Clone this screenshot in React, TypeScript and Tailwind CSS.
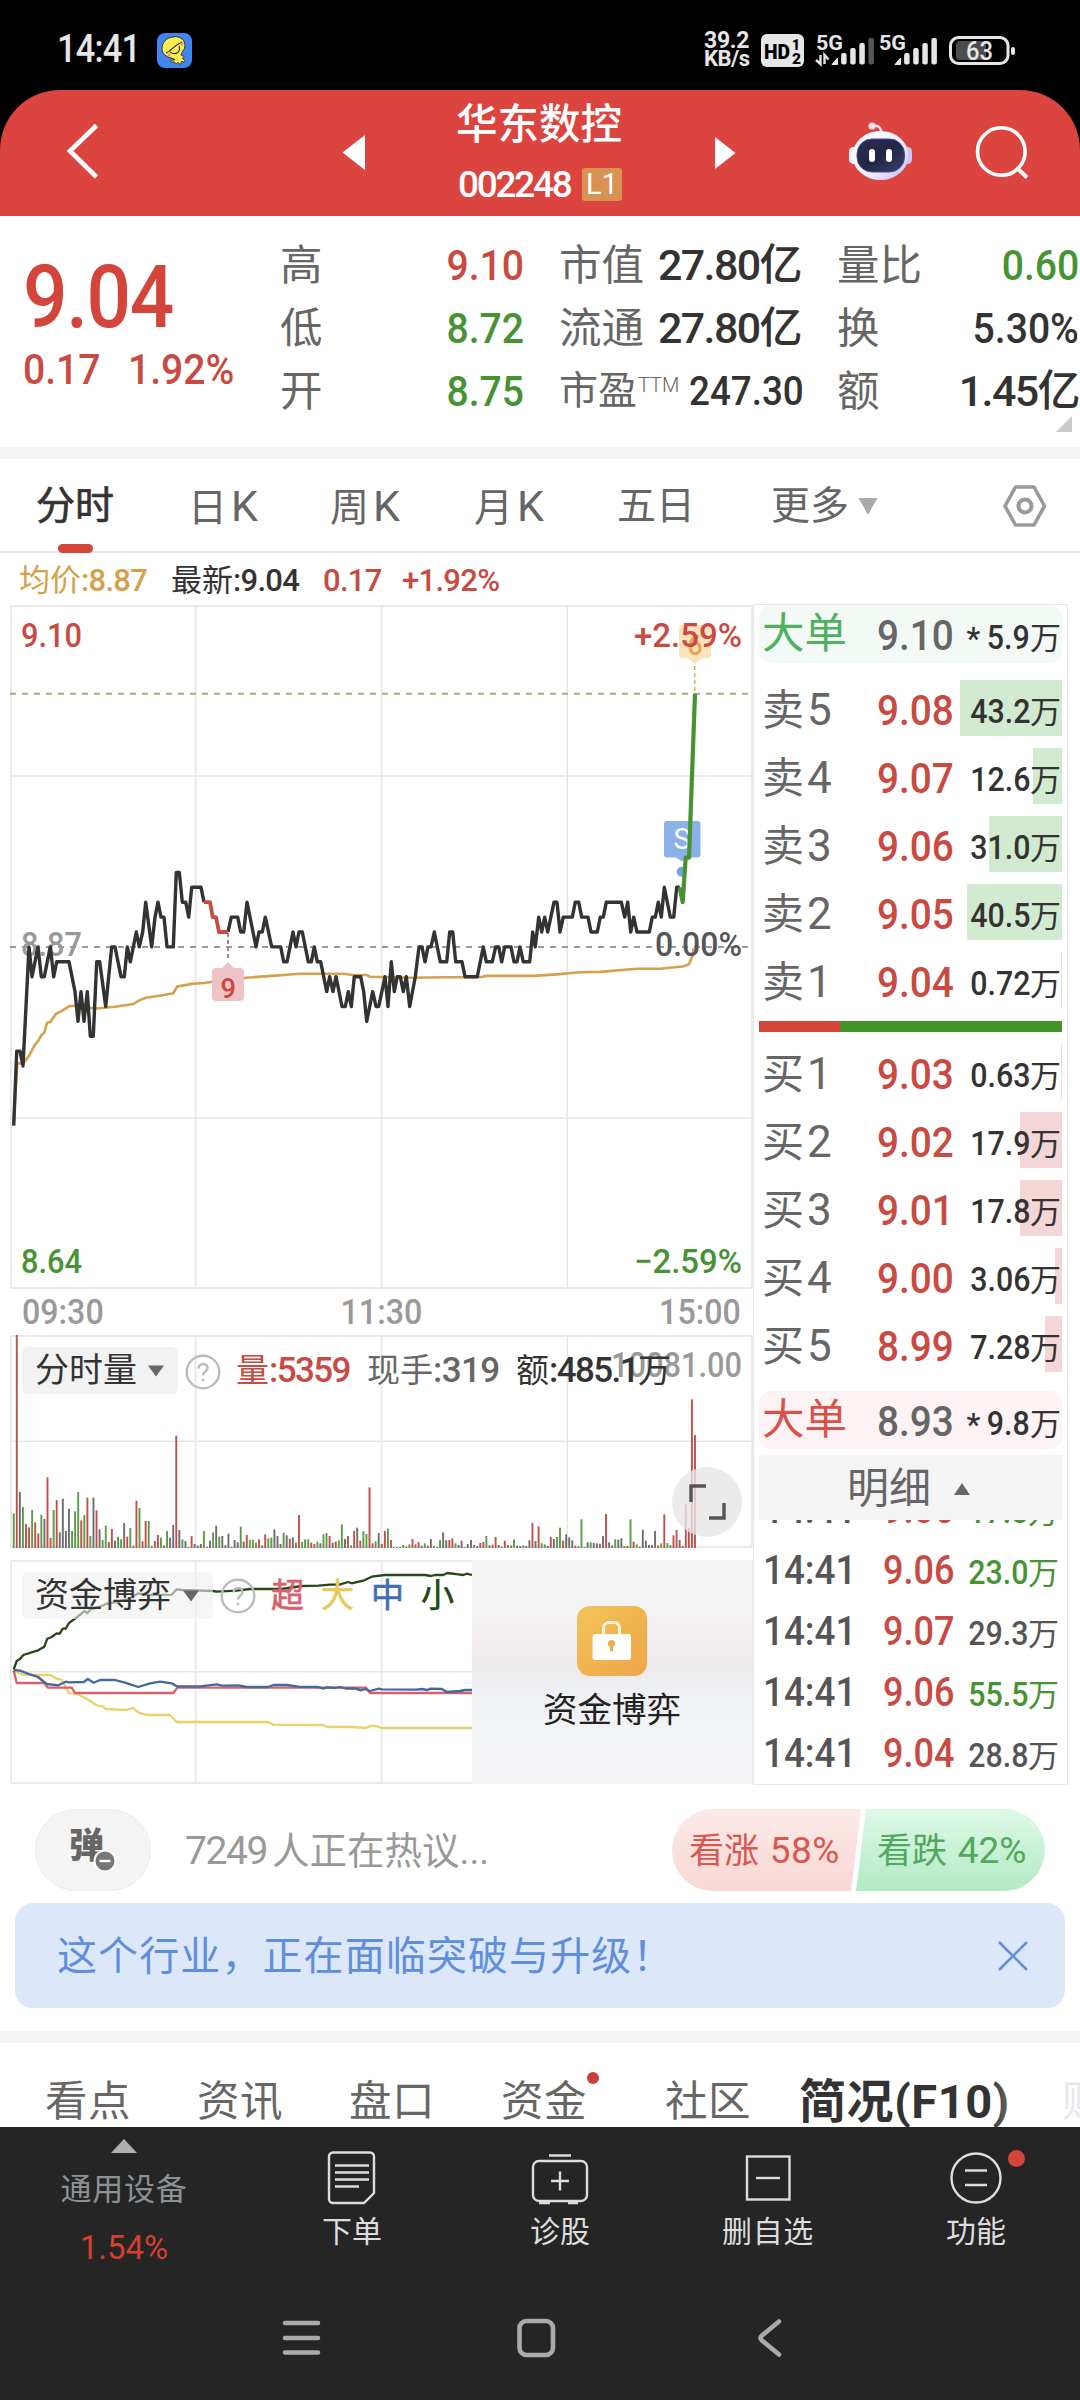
import React from 'react';

type Pt = [number, number];

const GREEN = '#479232';
const INK = '#333333';

/* Price path: x in thirds of a pixel, y in ticks of 0.01 around the previous close. */
const priceBefore: Pt[] = [
  [41, -12], [50, -7], [60, -7], [69, -8], [87, 0], [96, -2], [114, 0], [124, -2], [133, -2], [151, 0], [161, -2], [170, -1],
  [207, -1], [225, -3], [234, -5], [243, -3], [252, -5], [262, -3], [271, -6], [280, -6], [290, -1], [299, -1], [317, -4],
  [335, 0], [345, 0], [363, -2], [373, -2], [382, 0], [391, -1], [409, 1], [418, 0], [428, 1], [437, 3], [455, 0], [465, 2],
  [474, 3], [483, 2], [492, 2], [501, 0], [520, 0], [529, 5], [538, 5], [547, 3], [557, 3], [566, 2], [575, 4], [603, 4], [612, 3],
];
const priceDrop: Pt[] = [[612, 3], [630, 3], [638, 2], [648, 2], [657, 1], [684, 1]];
const priceAfter: Pt[] = [
  [684, 1], [694, 2], [713, 2], [722, 1], [731, 1], [741, 3], [768, 0], [777, 1], [787, 1], [796, 2], [815, 0], [842, 0],
  [851, -1], [861, -1], [879, 1], [888, 0], [897, 1], [907, 1], [925, -1], [934, -1], [943, 0], [952, -1], [962, -1],
  [980, -3], [989, -2], [999, -3], [1008, -2], [1026, -4], [1036, -4], [1045, -3], [1054, -4], [1063, -2], [1082, -2],
  [1091, -3], [1100, -5], [1118, -3], [1128, -4], [1136, -4], [1155, -2], [1164, -4], [1174, -1], [1183, -3], [1192, -2],
  [1201, -2], [1210, -3], [1219, -2], [1229, -4], [1246, -2], [1257, 0], [1266, 0], [1275, -1], [1284, 0], [1293, 0],
  [1303, 1], [1321, -1], [1340, -1], [1349, 1], [1358, 1], [1367, -1], [1386, -1], [1395, -2], [1432, -2], [1450, 0],
  [1459, -1], [1477, -1], [1487, 0], [1496, 0], [1505, -1], [1514, 0], [1533, 0], [1542, -1], [1551, -1], [1560, 0],
  [1570, -1], [1589, -1], [1598, 1], [1606, 0], [1616, 2], [1625, 1], [1634, 2], [1643, 1], [1662, 3], [1671, 3], [1680, 1],
  [1690, 2], [1717, 2], [1726, 3], [1736, 3], [1745, 2], [1764, 2], [1773, 1], [1792, 1], [1801, 2], [1810, 2], [1819, 3],
  [1864, 3], [1874, 2], [1883, 3], [1892, 1], [1901, 2], [1911, 1], [1948, 1], [1957, 2], [1966, 2], [1975, 3], [1984, 2],
  [1993, 4], [2011, 2], [2021, 2], [2030, 4], [2039, 4],
];
const priceSurge: Pt[] = [[2039, 4], [2048, 3], [2057, 6], [2067, 6], [2085, 17]];
const tick = (p: Pt[]) => p.map(([x, t]) => `${(x / 3).toFixed(1)},${(946.9 - t * 14.89).toFixed(1)}`).join(' ');

const average: Pt[] = [
  [41, 1172], [52, 1038], [70, 1038], [86, 1022], [104, 997], [114, 988], [124, 975], [133, 969], [141, 947], [151, 945], [168, 927],
  [187, 920], [207, 910], [240, 908], [262, 913], [290, 915], [345, 911], [400, 905], [418, 897], [437, 891], [483, 886],
  [520, 881], [531, 866], [575, 860], [612, 858], [667, 852], [740, 846], [815, 842], [900, 837], [1030, 837], [1060, 840],
  [1100, 840], [1110, 844], [1230, 846], [1340, 845], [1440, 845], [1460, 842], [1600, 842], [1660, 839], [1740, 834],
  [1800, 833], [1910, 826], [1980, 826], [2048, 821], [2067, 816], [2076, 800], [2082, 780],
];
const avgPoints = average.map(([x, y]) => `${(x / 3).toFixed(1)},${(600 + y / 2.24).toFixed(1)}`).join(' ');

/* Volume: first bar's x, then colour letter and bar top for each minute. */
const volume: [number, string][] = [
  [41, 'g670 r135 k606 g651 r702 r712 g660 r697 r730 g674 k687 r562 r744 g660 r630 k727 k626 k723 k656 g723 g664 g606 r691 g675 r623'],
  [271, 'g738 k623 r661 k718 g750 g707 r756 r717 k752 g740 g748 k699 r740 g714 r767 r632 g654 r754 r693 g693 g768 r753 r735 g743 k766'],
  [501, 'g723 k743 k705 r437 k720 g748 k753 k771 r738 k762 k767 k762 g723 k771 k752 g727 k707 g740 k738 k766 k731 r771 k750 k757 g710'],
  [731, 'k755 r735 g750 g750 g758 r748 k766 r733 g745 g743 k718 k738 k762 g728 k736 r746 k742 r758 r675 g756 g748 g748 r758 r762 g755'],
  [961, 'k760 g733 g729 r738 k758 r755 g751 g703 k747 r738 g766 r723 k713 r752 g724 g732 r592 r760 g754 k729 r762 r723 g716 r750'],
  [1182, 'g771 k771 r771 g765 r770 g763 r747 r763 r756 k767 g760 r767 k747 g768 k771 g750 k727 k751 r750 r745 g760 k765 k752 g771 k762'],
  [1413, 'k750 r765 k768 r759 r756 g738 k766 r764 r741 k765 k770 r752 r765 g766 g748 k767 k768 g766 k768 k751 r699 k753 r709 g760 g763'],
  [1643, 'k768 r741 k747 g741 g713 r752 k733 k742 k751 r767 g768 g688 k771 k757 g757 k759 k760 r761 k738 r672 k757 k766 g748 k749 k745'],
  [1873, 'g768 r768 g688 r755 g763 k770 k719 k752 k765 r765 k723 r766 g760 r673 g759 g765 r736 r720 k750 r768 r643 r713 r328 r435'],
];
const barColor: Record<string, string> = { r: '#c2504a', g: '#5b9c48', k: '#6e6e70' };
const bars = volume.flatMap(([x0, row]) =>
  row.split(' ').map((b, i) => ({ x: (x0 + i * 9.21) / 3 - 0.9, y: 1290 + Number(b.slice(1)) / 3, fill: barColor[b[0]] })),
);

const small: Pt[] = [
  [41, 1138], [50, 1113], [60, 1107], [70, 1095], [114, 1081], [133, 1070], [142, 1046], [155, 1041], [170, 1030], [179, 1031],
  [188, 1016], [197, 1016], [207, 999], [222, 988], [243, 972], [253, 963], [262, 970], [272, 958], [300, 950], [318, 942],
  [355, 935], [390, 925], [415, 910], [440, 915], [515, 914], [530, 898], [545, 900], [640, 903], [650, 905], [710, 902],
  [750, 897], [845, 897], [905, 888], [955, 887], [990, 884], [1018, 884], [1045, 876], [1055, 880], [1090, 872], [1115, 860],
  [1155, 855], [1275, 855], [1293, 858], [1305, 855], [1330, 855], [1342, 849], [1375, 853], [1390, 855], [1400, 851], [1416, 855],
];
const medium: Pt[] = [
  [41, 1140], [60, 1142], [90, 1153], [114, 1161], [140, 1182], [175, 1186], [197, 1175], [207, 1177], [252, 1176], [263, 1167],
  [281, 1178], [300, 1170], [345, 1170], [375, 1178], [415, 1191], [450, 1180], [480, 1175], [515, 1180], [530, 1189],
  [600, 1189], [650, 1183], [665, 1187], [715, 1186], [740, 1191], [805, 1191], [820, 1185], [860, 1185], [895, 1190],
  [955, 1191], [970, 1196], [980, 1192], [1005, 1194], [1018, 1191], [1040, 1196], [1065, 1195], [1082, 1201], [1095, 1197],
  [1110, 1203], [1137, 1196], [1145, 1198], [1250, 1199], [1265, 1197], [1283, 1200], [1290, 1196], [1325, 1197],
  [1340, 1206], [1380, 1203], [1395, 1200], [1416, 1200],
];
const superBig: Pt[] = [
  [41, 1142], [50, 1179], [133, 1179], [143, 1193], [215, 1193], [225, 1209], [520, 1209], [532, 1193], [1098, 1193], [1110, 1209], [1416, 1209],
];
const big: Pt[] = [
  [41, 1142], [70, 1155], [150, 1155], [168, 1165], [185, 1170], [207, 1210], [230, 1211], [262, 1228], [290, 1246], [308, 1249],
  [318, 1257], [380, 1260], [398, 1253], [415, 1267], [440, 1275], [510, 1275], [530, 1296], [805, 1296], [820, 1304],
  [970, 1305], [980, 1311], [1060, 1311], [1098, 1314], [1115, 1307], [1130, 1309], [1145, 1314], [1416, 1314],
];
const fund = (p: Pt[]) => p.map(([x, y]) => `${(x / 3).toFixed(1)},${(1290 + y / 3).toFixed(1)}`).join(' ');

type LabelProps = { x: number; y: number; w: number; size: number; fill: string; weight?: number; children: string };
function Label({ x, y, w, size, fill, weight = 500, children }: LabelProps) {
  return (
    <text x={x} y={y} textLength={w} lengthAdjust="spacingAndGlyphs" fontSize={size} fill={fill} fontWeight={weight}>
      {children}
    </text>
  );
}

function StatusBar() {
  return (
    <div className="flex h-[90px] items-center bg-black text-[#e6e6e6]">
      <span className="ml-[57px] w-[100px] origin-left scale-x-[.9] pt-[9px] text-[38px] font-medium tracking-[-0.800px]">14:41</span>
      <svg className="mt-[10px] h-[35px] w-[35px]" viewBox="0 0 35 35">
        <rect width="35" height="35" rx="8" fill="#3f87ee" />
        <path d="M17 4C9 4 5 10 5 15.500c0 5 4 8.500 9 9.500l4 1.500c-1 1-4 0-4 2 0 1.500 3 0 3.500.5s0 2 1.500 2 1-1.500 2-1.500 1 2 2.500 1.500 0-2 1-2.500 3 1.500 3.500 0-2-2-2.500-3 2-1 1.500-2-3-.5-3-2c1-3 4-5 4-9 0-5-4-9-11-9z" fill="#fbee55" stroke="#333" strokeWidth="1" />
        <path d="M9 20c4-1 6-6 16-11M13 19c6 4 11 0 9-6" fill="none" stroke="#333" strokeWidth="1.2" />
        <circle cx="25" cy="11" r="1.6" fill="#f29a4e" /><circle cx="12" cy="22" r="1.6" fill="#f29a4e" />
      </svg>
      <div className="mt-[9px] mr-[64px] ml-auto flex items-center">
        <div className="w-[57px] text-[23px] leading-[18px] font-bold tracking-[-0.300px]">
          <div>39.2</div>
          <div className="text-[22px] tracking-[-0.500px]">KB/s</div>
        </div>
        <svg className="h-[36px] w-[255px]" viewBox="761 31 255 36" fontFamily="Roboto, sans-serif">
          <rect x="761" y="33" width="43" height="33" rx="6" fill="#e6e6e6" />
          <Label x={764} y={57.500} w={26} size={21} fill="#000" weight={900}>HD</Label>
          <Label x={792} y={49} w={8} size={15} fill="#000" weight={900}>1</Label>
          <Label x={792} y={63} w={9} size={15} fill="#000" weight={900}>2</Label>
          <Label x={816} y={49} w={27} size={21} fill="#e6e6e6" weight={700}>5G</Label>
          <Label x={879} y={49} w={27} size={21} fill="#e6e6e6" weight={700}>5G</Label>
          <path d="M820.5 54v9l-4.500-4M824.500 63v-9l4 4.500" fill="none" stroke="#e6e6e6" strokeWidth="2.400" />
          {[1, 2, 3, 4].map((i) => (
            <g key={i}>
              <rect x={832 + i * 9.1} y={57 - i * 5} width="5.500" height={6.500 + i * 5} rx="2" fill={i === 4 ? '#565656' : '#e6e6e6'} />
              <rect x={895 + i * 9.1} y={57 - i * 5} width="5.500" height={6.500 + i * 5} rx="2" fill="#e6e6e6" />
            </g>
          ))}
          <path d="M832 63.500l5.500-6.500v6.500zM895 63.500l5.500-6.500v6.500z" fill="#e6e6e6" stroke="#e6e6e6" strokeLinejoin="round" />
          <rect x="950.500" y="36.500" width="57.500" height="26" rx="8" fill="none" stroke="#e6e6e6" strokeWidth="3" />
          <path d="M960 40h26v19h-26a4 4 0 0 1-4-4V44a4 4 0 0 1 4-4z" fill="#4c4c4c" />
          <rect x="1011" y="46" width="4" height="8" rx="2" fill="#e6e6e6" />
          <Label x={966} y={58.500} w={27} size={25} fill="#e6e6e6">63</Label>
        </svg>
      </div>
    </div>
  );
}

function Header() {
  return (
    <div className="bg-black">
      <div className="flex h-[126px] items-center rounded-t-[60px] bg-[#dc4440] text-white">
        <svg className="mt-[-4px] ml-[62px] h-[60px] w-[40px]" viewBox="62 121 40 60"><path d="M96.500 125.500L70 151l26.500 26" fill="none" stroke="#fff" strokeWidth="4.600" /></svg>
        <svg className="ml-[240px] h-[36px] w-[24px]" viewBox="342 135 24 36"><path d="M342.500 152.500L365 135v35z" fill="#fff" /></svg>
        <div className="ml-[90px] w-[168px]">
          <div className="h-[60px] text-[41.500px] leading-[58px] font-medium whitespace-nowrap">华东数控</div>
          <div className="flex h-[54px] items-center pt-[2px]">
            <span className="w-[126px] pl-[2px] text-[37px] leading-none font-medium tracking-[-2.300px]">002248</span>
            <span className="flex h-[33px] w-[40px] items-center justify-center rounded-[3px] bg-[#d89253] text-[29px] leading-none">L1</span>
          </div>
        </div>
        <svg className="ml-[90px] h-[36px] w-[22px]" viewBox="713 135 22 36"><path d="M734.500 153L714 137v32z" fill="#fff" /></svg>
        <svg className="mt-[-4px] ml-[111px] h-[62px] w-[66px]" viewBox="846 120 66 62">
          <defs>
            <linearGradient id="shell" x1="0" y1="0" x2="1" y2="1"><stop offset="0" stopColor="#fff" /><stop offset="0.600" stopColor="#f3effd" /><stop offset="1" stopColor="#c0b6ea" /></linearGradient>
            <linearGradient id="visor" x1="0" y1="0" x2="1" y2="1"><stop offset="0" stopColor="#2a3154" /><stop offset="0.500" stopColor="#1f2645" /><stop offset="1" stopColor="#3a4166" /></linearGradient>
          </defs>
          <path d="M871 126c6-1 9 1 9.500 7" fill="none" stroke="#f6e9f2" strokeWidth="2.400" />
          <circle cx="871" cy="126" r="3.600" fill="#f8dfe6" />
          <rect x="848" y="147" width="9" height="17" rx="4.500" fill="#f3effd" />
          <rect x="902" y="147" width="9" height="17" rx="4.500" fill="#cdc5ef" />
          <ellipse cx="879.500" cy="155.500" rx="28" ry="24.500" fill="url(#shell)" />
          <rect x="856" y="139" width="47.500" height="33" rx="15" fill="url(#visor)" stroke="#4c46a0" strokeWidth="1" />
          <rect x="868" y="149" width="6" height="13" rx="3" fill="#fff" />
          <rect x="885" y="149" width="6" height="13" rx="3" fill="#fff" />
        </svg>
        <svg className="mt-[-2px] ml-[61px] h-[60px] w-[60px]" viewBox="974 122 60 60"><circle cx="1001.300" cy="151.500" r="23.800" fill="none" stroke="#fff" strokeWidth="3.600" /><path d="M1017 168l10 9.500" stroke="#fff" strokeWidth="4" /></svg>
      </div>
    </div>
  );
}

function Quote() {
  const lab = 'text-[42.500px] text-[#666] leading-[63px]';
  const num = 'text-[43px] font-medium leading-[63px] tracking-[-1.600px] text-right';
  const price = 'origin-right scale-x-[.91] text-right text-[43px] leading-[63px] font-medium';
  return (
    <div className="relative flex h-[231px] bg-white pt-[18px] whitespace-nowrap">
      <div className="ml-[23px] w-[257px] text-[#d3443a]">
        <div className="mt-[13px] origin-left scale-x-[.9] text-[87px] leading-[100px] font-medium tracking-[-1.500px]">9.04</div>
        <div className="mt-[-5px] flex text-[43px] leading-[54px] font-medium text-[#c84a42]">
          <span className="w-[105px] origin-left scale-x-[.91]">0.17</span><span className="origin-left scale-x-[.91]">1.92%</span>
        </div>
      </div>
      <div className="w-[60px]"><div className={lab}>高</div><div className={lab}>低</div><div className={lab}>开</div></div>
      <div className="w-[184px]">
        <div className={price + ' text-[#c84a42]'}>9.10</div><div className={price + ' text-[#479232]'}>8.72</div><div className={price + ' text-[#479232]'}>8.75</div>
      </div>
      <div className="ml-[35px] flex w-[242px] flex-col text-[#333]">
        <div className="flex justify-between"><span className={lab}>市值</span><span className={num}>27.80亿</span></div>
        <div className="flex justify-between"><span className={lab}>流通</span><span className={num}>27.80亿</span></div>
        <div className="flex justify-between leading-[63px]">
          <span className="flex text-[39px] text-[#666]">市盈<span className="mt-[-6px] ml-px text-[20px] font-light">TTM</span></span>
          <span className="origin-right scale-x-[.92] text-[40px] font-medium">247.30</span>
        </div>
      </div>
      <div className="ml-[36px] flex w-[242px] flex-col text-[#333]">
        <div className="flex justify-between"><span className={lab}>量比</span><span className={price + ' text-[#479232]'}>0.60</span></div>
        <div className="flex justify-between"><span className={lab}>换</span><span className={price}>5.30%</span></div>
        <div className="flex justify-between"><span className={lab}>额</span><span className={num}>1.45亿</span></div>
      </div>
      <svg className="absolute right-[8px] bottom-[15px] h-4 w-4" viewBox="0 0 16 16"><path d="M16 0v16H0z" fill="#ccc" /></svg>
    </div>
  );
}

function PeriodTabs() {
  return (
    <div className="flex h-[94px] items-center border-b-2 border-[#e8e8e8] bg-white pt-[2px] text-[39px] whitespace-nowrap text-[#666]">
      <div className="relative ml-[36px] w-[152px] text-[#333]">
        <span className="[-webkit-text-stroke:0.700px_#333]">分时</span>
        <span className="absolute top-[67px] left-[22px] h-[9px] w-[35px] rounded-full bg-[#d3443a]" />
      </div>
      <div className="w-[142px]">日<span className="ml-1 text-[43px]">K</span></div>
      <div className="w-[144px]">周<span className="ml-1 text-[43px]">K</span></div>
      <div className="w-[143px]">月<span className="ml-1 text-[43px]">K</span></div>
      <div className="w-[154px]">五日</div>
      <div className="flex w-[231px] items-center gap-[9px]">更多<svg className="h-4 w-5" viewBox="0 0 20 16"><path d="M1 0h18L10 16z" fill="#aaa" stroke="#aaa" strokeLinejoin="round" /></svg></div>
      <svg className="h-[44px] w-[46px]" viewBox="0 0 46 44" fill="none" stroke="#999" strokeWidth="3.600"><path d="M13.500 3h18.500l10.500 19-10.500 19H13.500L3 22z" strokeLinejoin="round" /><circle cx="23" cy="22" r="6.500" strokeWidth="4" /></svg>
    </div>
  );
}

function Averages() {
  const n = 'text-[31px] font-medium tracking-[-0.700px]';
  return (
    <div className="flex h-[51px] items-center pt-[5px] text-[31px] whitespace-nowrap">
      <div className="ml-[19px] w-[152px] text-[#d4a04a]">均价<span className={n}>:8.87</span></div>
      <div className="w-[152px] text-[#333]">最新<span className={n}>:9.04</span></div>
      <div className={n + ' w-[79px] text-[#c84a42]'}>0.17</div>
      <div className={n + ' text-[#c84a42]'}>+1.92%</div>
    </div>
  );
}

function Grid({ top, bottom, rows }: { top: number; bottom: number; rows: number[] }) {
  return (
    <g stroke="#e6e6e6" strokeWidth="1.600">
      <path d={`M11 ${top}V${bottom}M752 ${top}V${bottom}M10 ${top + 1}H753M10 ${bottom - 1}H753`} stroke="#eaeaea" strokeWidth="2" />
      {[195.700, 381.600, 567.300].map((x) => <path key={x} d={`M${x} ${top}V${bottom}`} />)}
      {rows.map((y) => <path key={y} d={`M10 ${y}H753`} />)}
    </g>
  );
}

function PriceChart() {
  const line = { fill: 'none', strokeLinejoin: 'round' as const, strokeWidth: 3.4 };
  return (
    <svg className="block h-[684px] w-[743px]" viewBox="10 605 743 684">
      <Grid top={605} bottom={1289} rows={[776, 1118]} />
      <path d="M10 693.800H749" stroke="#b5a67c" strokeWidth="2" strokeDasharray="6 6" />
      <path d="M10 947H749" stroke="#999" strokeWidth="1.800" strokeDasharray="6 6" />
      <Label x={21} y={956} w={61} size={34} fill="#999">8.87</Label>
      <polyline points={avgPoints} {...line} stroke="#d6a04c" strokeWidth={2.600} />
      <path d="M212 972a4 4 0 0 1 4-4h6l6-6 6 6h6a4 4 0 0 1 4 4v25a4 4 0 0 1-4 4h-24a4 4 0 0 1-4-4z" fill="#efc3c3" />
      <path d="M228 933v28" stroke="#b76f6f" strokeWidth="1.800" strokeDasharray="4 3" />
      <Label x={220.500} y={998} w={15.500} size={27} fill="#cb4640">9</Label>
      <path d="M679 629a4 4 0 0 1 4-4h24a4 4 0 0 1 4 4v25a4 4 0 0 1-4 4h-5l-7 6-7-6h-5a4 4 0 0 1-4-4z" fill="#fbe2bd" />
      <Label x={687.500} y={655} w={15} size={27} fill="#e8a64a">6</Label>
      <path d="M694.700 666v27" stroke="#dfb05c" strokeWidth="1.600" strokeDasharray="4 3" />
      <path d="M664 824a3 3 0 0 1 3-3h30.500a3 3 0 0 1 3 3v30.500a3 3 0 0 1-3 3H688l-6 4-6-4h-9a3 3 0 0 1-3-3z" fill="#8ab1e8" />
      <Label x={673.500} y={849} w={17} size={29} fill="#fff" weight={400}>S</Label>
      <circle cx="681.700" cy="871.700" r="5" fill="#78a5e2" />
      <polyline points={tick(priceBefore)} {...line} stroke={INK} />
      <polyline points={tick(priceAfter)} {...line} stroke={INK} />
      <polyline points={tick(priceDrop)} {...line} stroke="#c64c44" strokeWidth={3.800} />
      <polyline points={tick(priceSurge)} {...line} stroke={GREEN} strokeWidth={4.200} />
      <Label x={21} y={646.500} w={61} size={34} fill="#c84a42">9.10</Label>
      <Label x={634} y={646.500} w={108} size={34} fill="#c84a42">+2.59%</Label>
      <Label x={655} y={956} w={87} size={34} fill="#555">0.00%</Label>
      <Label x={21} y={1273} w={61} size={34} fill={GREEN}>8.64</Label>
      <Label x={634} y={1273} w={108} size={34} fill={GREEN}>−2.59%</Label>
    </svg>
  );
}

function HelpIcon() {
  return (
    <svg className="h-[36px] w-[36px]" viewBox="0 0 36 36" fill="none" stroke="#bbb" strokeWidth="2.400">
      <circle cx="18" cy="18" r="16.300" />
      <path d="M13.500 14.500c0-6 9-6 9-.5 0 3.500-4.500 3.500-4.500 7.500M18 24.800v2.600" />
    </svg>
  );
}

const Caret = () => <svg className="h-[12px] w-[16px]" viewBox="0 0 16 12"><path d="M0 0.500h16L8 11.500z" fill="#666" /></svg>;

function VolumeChart() {
  const n = 'font-medium text-[35px] tracking-[-1.600px]';
  return (
    <div className="relative h-[213px] w-[743px]">
      <svg className="block h-full w-full" viewBox="10 1335 743 213">
        <Grid top={1335} bottom={1548} rows={[1441.300]} />
        {bars.map((b, i) => <rect key={i} x={b.x} y={b.y} width="1.900" height={1548 - b.y} fill={b.fill} />)}
        <Label x={611} y={1377} w={131} size={35} fill="#999">10081.00</Label>
      </svg>
      <div className="absolute top-[12px] left-[12px] flex h-[47px] items-center text-[33px] leading-[47px] whitespace-nowrap">
        <div className="flex h-full w-[156px] items-center justify-between rounded-[6px] bg-[#f2f2f2] pr-[14px] pl-[13px] text-[34px] text-[#333]">分时量<Caret /></div>
        <div className="ml-[7px] w-[51px] pt-[2px]"><HelpIcon /></div>
        <div className="w-[131px] text-[#c84a42]">量<span className={n}>:5359</span></div>
        <div className="w-[149px] text-[#666]">现手<span className="text-[35px] font-medium tracking-[-0.600px]">:319</span></div>
        <div className="text-[#333]">额<span className={n}>:485.1</span>万</div>
      </div>
      <div className="absolute top-[132px] left-[662px] flex h-[70px] w-[70px] items-center justify-center rounded-full bg-[#e6e6e6]/80">
        <svg className="h-[38px] w-[38px]" viewBox="0 0 38 38" fill="none" stroke="#555" strokeWidth="3.400"><path d="M3 19V3h15M36 20v15H21" /></svg>
      </div>
    </div>
  );
}

function FundChart() {
  const line = { fill: 'none', strokeLinejoin: 'round' as const, strokeWidth: 2.3 };
  return (
    <div className="relative mt-[12px] h-[224px] w-[743px]">
      <svg className="block h-full w-full" viewBox="10 1560 743 224">
        <Grid top={1560} bottom={1784} rows={[1671.700]} />
        <polyline points={fund(big)} {...line} stroke="#ebd06c" />
        <polyline points={fund(superBig)} {...line} stroke="#d9606c" />
        <polyline points={fund(medium)} {...line} stroke="#42699f" />
        <polyline points={fund(small)} {...line} stroke="#264717" />
      </svg>
      <div className="absolute top-[12px] left-[12px] flex h-[47px] items-center text-[33px] leading-[47px] whitespace-nowrap">
        <div className="flex h-full w-[191px] items-center rounded-[6px] bg-[#f0f0f0]/60 pl-[13px] text-[34px] text-[#333]"><span className="w-[148px]">资金博弈</span><Caret /></div>
        <div className="ml-[7px] w-[51px] pt-[1px]"><HelpIcon /></div>
        <div className="w-[50px] text-[#d9606c] [-webkit-text-stroke:0.600px_#d9606c]">超</div>
        <div className="w-[50px] text-[#e8c95c] [-webkit-text-stroke:0.600px_#e8c95c]">大</div>
        <div className="w-[50px] text-[#3f6fad] [-webkit-text-stroke:0.600px_#3f6fad]">中</div>
        <div className="text-[#264717] [-webkit-text-stroke:0.600px_#264717]">小</div>
      </div>
      <div className="absolute top-0 right-[1px] flex h-full w-[280px] flex-col items-center bg-[linear-gradient(#f5f5f6_15%,#f2ecee_38%,#eeebed_48%,#eef0f3_58%,#f3f4f7_80%,#f6f5f8)] pt-[46px]">
        <svg className="h-[70px] w-[70px]" viewBox="0 0 70 70">
          <defs><linearGradient id="gold" x1="0" y1="0" x2="1" y2="1"><stop offset="0" stopColor="#f2c35a" /><stop offset="1" stopColor="#efa548" /></linearGradient></defs>
          <rect width="70" height="70" rx="13" fill="url(#gold)" />
          <path d="M26.500 29v-7a5.500 5.500 0 0 1 5.500-5.500h5a5.500 5.500 0 0 1 5.500 5.500v7" fill="none" stroke="#fff6dd" strokeWidth="3" />
          <rect x="15.500" y="28" width="38.500" height="26" rx="3" fill="#fff" />
          <circle cx="34.500" cy="37.500" r="3.600" fill="#e8b04c" /><rect x="33" y="38" width="3" height="7.500" rx="1.200" fill="#e8b04c" />
        </svg>
        <div className="mt-[9px] text-[34.500px] leading-[50px] text-[#222]">资金博弈</div>
      </div>
    </div>
  );
}

type Row = { side: string; price: string; qty: string; bar: string };
const asks: Row[] = [
  { side: '卖5', price: '9.08', qty: '43.2', bar: 'w-[102px] bg-[#d2eacf]' },
  { side: '卖4', price: '9.07', qty: '12.6', bar: 'w-[29px] bg-[#d2eacf]' },
  { side: '卖3', price: '9.06', qty: '31.0', bar: 'w-[73px] bg-[#d2eacf]' },
  { side: '卖2', price: '9.05', qty: '40.5', bar: 'w-[95px] bg-[#d2eacf]' },
  { side: '卖1', price: '9.04', qty: '0.72', bar: 'w-px bg-[#d2eacf]' },
];
const bids: Row[] = [
  { side: '买1', price: '9.03', qty: '0.63', bar: 'w-px bg-[#f4d6d6]' },
  { side: '买2', price: '9.02', qty: '17.9', bar: 'w-[42px] bg-[#f4d6d6]' },
  { side: '买3', price: '9.01', qty: '17.8', bar: 'w-[42px] bg-[#f4d6d6]' },
  { side: '买4', price: '9.00', qty: '3.06', bar: 'w-[7px] bg-[#f4d6d6]' },
  { side: '买5', price: '8.99', qty: '7.28', bar: 'w-[17px] bg-[#f4d6d6]' },
];

function Qty({ children }: { children: string }) {
  return (
    <span className="ml-auto flex items-baseline pt-[7px] pr-[1px] text-[33px] leading-none font-medium">
      {children[0] === '*' && <span className="mr-[3px] text-[31px]">*</span>}
      <span className="origin-right scale-x-[.92]">{children.replace('*', '')}</span>
      <span className="text-[31px] font-normal">万</span>
    </span>
  );
}

function BookRow({ side, price, qty, bar }: Row) {
  return (
    <div className="relative flex h-[68px] items-center whitespace-nowrap">
      <span className={'absolute top-[6px] right-0 h-[56px] ' + bar} />
      <span className="relative ml-[3px] w-[115px] pt-[3px] text-[42px] leading-none text-[#666]">{side[0]}<span className="ml-[3px] text-[44px]">{side[1]}</span></span>
      <span className="relative origin-left scale-x-[.9] pt-[5px] text-[43px] leading-none font-medium text-[#c84a42]">{price}</span>
      <span className="relative ml-auto flex leading-none text-[#333]"><Qty>{qty}</Qty></span>
    </div>
  );
}

function BigOrder({ tone, price, qty }: { tone: string; price: string; qty: string }) {
  return (
    <div className={'flex h-[58px] items-center rounded-[12px] leading-none whitespace-nowrap ' + tone}>
      <span className="ml-[3px] w-[115px] text-[42.500px]">大单</span>
      <span className="origin-left scale-x-[.9] pt-[3px] text-[43px] font-medium text-[#666]">{price}</span>
      <span className="ml-auto flex text-[#333]"><Qty>{qty}</Qty></span>
    </div>
  );
}

function OrderBook() {
  const deals: [string, string, string][] = [
    ['9.06', '17.8', 'text-[#479232]'], ['9.06', '23.0', 'text-[#479232]'], ['9.07', '29.3', 'text-[#555]'], ['9.06', '55.5', 'text-[#479232]'], ['9.04', '28.8', 'text-[#555]'],
  ];
  return (
    <div className="h-[1181px] w-[315px] border border-[#e8e8e8] pr-[5px] pl-[5px]">
      <BigOrder tone="bg-[#f3faf6] text-[#4fb05f]" price="9.10" qty="*5.9" />
      <div className="mt-[11px]">{asks.map((r) => <BookRow key={r.side} {...r} />)}</div>
      <div className="mt-[7px] flex h-[11px]"><div className="w-[81px] bg-[#d3443a]" /><div className="flex-1 bg-[#429429]" /></div>
      <div className="mt-[6px]">{bids.map((r) => <BookRow key={r.side} {...r} />)}</div>
      <div className="mt-[13px]"><BigOrder tone="bg-[#fdf3f4] text-[#d8524a]" price="8.93" qty="*9.8" /></div>
      <div className="mt-[6px] flex h-[65px] items-center bg-[#f4f4f4] pt-[2px] pl-[88px] text-[42px] leading-none text-[#666]">
        明细<svg className="ml-[23px] h-[12px] w-[16px]" viewBox="0 0 16 12"><path d="M8 0l8 12H0z" fill="#666" /></svg>
      </div>
      <div className="flex h-[263px] flex-col justify-end overflow-hidden">
        {deals.map(([p, q, c], i) => (
          <div key={i} className="flex h-[61px] shrink-0 items-center pt-[2px] leading-none font-medium whitespace-nowrap">
            <span className="ml-[4px] w-[122px] origin-left scale-x-[.92] text-[40px] text-[#555]">14:41</span>
            <span className="origin-left scale-x-[.9] text-[40px] text-[#c84a42]">{p}</span>
            <span className={'ml-auto flex items-baseline pt-[3px] pr-[3px] text-[33px] ' + c}><span className="origin-right scale-x-[.92]">{q}</span><span className="text-[31px] font-normal">万</span></span>
          </div>
        ))}
      </div>
    </div>
  );
}

function Discussion() {
  return (
    <div className="mt-[24px] flex h-[82px] items-center whitespace-nowrap">
      <div className="relative ml-[35px] flex h-[82px] w-[116px] items-center rounded-full border border-[#ececec] bg-[#f4f4f4] pl-[33px] text-[35px] font-black text-[#666]">
        <span className="mt-[-6px]">弹</span>
        <svg className="absolute top-[39px] left-[57px] h-6 w-6" viewBox="0 0 24 24"><circle cx="12" cy="12" r="10.500" fill="#777" stroke="#fff" strokeWidth="2" /><path d="M6.500 12h11" stroke="#fff" strokeWidth="2.400" /></svg>
      </div>
      <div className="ml-[34px] pt-[2px] text-[37.500px] text-[#999]"><span className="mr-[5px] text-[39px] tracking-[-1.400px]">7249</span>人正在热议...</div>
      <div className="relative mr-[35px] ml-auto flex h-[82px] w-[373px] items-center pt-[2px] text-[35px]">
        <svg className="absolute inset-0 h-full w-full" viewBox="0 0 373 82">
          <defs>
            <linearGradient id="up" x1="0" y1="0" x2="0" y2="1"><stop offset="0" stopColor="#fbeae8" /><stop offset="1" stopColor="#f8d8d4" /></linearGradient>
            <linearGradient id="down" x1="0" y1="0" x2="0" y2="1"><stop offset="0" stopColor="#dff9e8" /><stop offset="1" stopColor="#b2eac4" /></linearGradient>
          </defs>
          <path d="M41 0h148l-10 82H41a41 41 0 0 1 0-82z" fill="url(#up)" />
          <path d="M194 0h138a41 41 0 0 1 0 82H184z" fill="url(#down)" />
        </svg>
        <span className="relative ml-[17px] w-[188px] text-[#d8574f]">看涨 <span className="ml-[2px] text-[37px] tracking-[0.500px]">58%</span></span>
        <span className="relative text-[#52a85c]">看跌 <span className="ml-[2px] text-[37px]">42%</span></span>
      </div>
    </div>
  );
}

function InfoTabs() {
  const tab = 'shrink-0';
  return (
    <div className="relative flex h-[84px] overflow-hidden bg-white pt-[28px] text-[42.500px] leading-[62px] tracking-[0.600px] whitespace-nowrap text-[#666]">
      <div className={tab + ' ml-[45px] w-[152px]'}>看点</div>
      <div className={tab + ' w-[152px]'}>资讯</div>
      <div className={tab + ' w-[152px]'}>盘口</div>
      <div className={tab + ' relative w-[164px]'}>资金<span className="absolute top-[1px] left-[86px] h-[12px] w-[12px] rounded-full bg-[#c9403a]" /></div>
      <div className={tab + ' w-[134px]'}>社区</div>
      <div className={tab + ' w-[263px] text-[47px] font-bold tracking-[0.600px] text-[#333]'}>简况(F10)</div>
      <div className={tab}>财</div>
      <div className="absolute top-0 right-0 h-full w-[90px] bg-linear-to-r from-white/0 to-white/85 to-70%" />
    </div>
  );
}

function Toolbar() {
  const item = 'flex w-[208px] flex-col items-center text-[30px] leading-[44px] text-[#ddd]';
  return (
    <div className="h-[273px] bg-[#252525]">
      <div className="flex h-[152px]">
        <div className="flex w-[248px] flex-col items-center pt-[12px] text-[31px] leading-[56px] text-[#8b9296]">
          <svg className="h-[14px] w-[26px]" viewBox="0 0 26 14"><path d="M13 0l13 14H0z" fill="#b0b0b0" /></svg>
          <span className="mt-[9px] tracking-[0.700px]">通用设备</span>
          <span className="mt-[2px] text-[33px] leading-[56px] text-[#d3402f]">1.54%</span>
        </div>
        <div className={item}>
          <svg className="mt-[22px] h-[56px] w-[60px]" viewBox="322 2149 60 56" fill="none" stroke="#ddd" strokeWidth="2.400"><path d="M333 2152.500h37a4 4 0 0 1 4 4V2193l-10 10h-31a4 4 0 0 1-4-4v-42.500a4 4 0 0 1 4-4zM335 2165.500h34M335 2172.500h34M335 2179.500h34M335 2186.500h24" /></svg>
          <span className="mt-[5px]">下单</span>
        </div>
        <div className={item}>
          <svg className="mt-[22px] h-[56px] w-[60px]" viewBox="530 2149 60 56" fill="none" stroke="#ddd" strokeWidth="2.400"><rect x="533" y="2161" width="54" height="40" rx="6" /><path d="M549 2155.500h22M551 2181h18M560 2171.500v19M539 2203h11M568 2203h10" /></svg>
          <span className="mt-[5px]">诊股</span>
        </div>
        <div className={item}>
          <svg className="mt-[22px] h-[56px] w-[60px]" viewBox="738 2149 60 56" fill="none" stroke="#ddd" strokeWidth="2.400"><rect x="747" y="2156.500" width="42.500" height="43" /><path d="M756 2178h24" /></svg>
          <span className="mt-[5px] tracking-[0.600px]">删自选</span>
        </div>
        <div className={item + ' relative'}>
          <svg className="mt-[22px] h-[56px] w-[60px]" viewBox="946 2149 60 56" fill="none" stroke="#ddd" strokeWidth="2.400"><circle cx="976" cy="2178" r="24.500" /><path d="M965 2170.500h22M965 2185h22" /></svg>
          <span className="mt-[5px]">功能</span>
          <span className="absolute top-[23px] left-[136px] h-[17px] w-[17px] rounded-full bg-[#d3443a]" />
        </div>
      </div>
      <svg className="mt-[37px] ml-[280px] h-[44px] w-[505px]" viewBox="280 2316 505 44" fill="none" stroke="#aaa" strokeLinecap="round" strokeWidth="4.600">
        <path d="M285 2323h33M285 2338h33M285 2352.500h33" />
        <rect x="519.500" y="2321" width="33.500" height="34" rx="7" />
        <path d="M779 2321.500l-17 14q-3 2.500 0 5l17 14" />
      </svg>
    </div>
  );
}

export default function App() {
  return (
    <div className="h-[2400px] w-[1080px] overflow-hidden bg-white font-[Roboto,'Noto_Sans_CJK_SC',sans-serif]">
      <StatusBar />
      <Header />
      <Quote />
      <div className="h-[12px] bg-[#f4f4f4]" />
      <PeriodTabs />
      <Averages />
      <div className="flex pl-[10px]">
        <div className="w-[743px] pt-px">
          <PriceChart />
          <div className="flex h-[46px] items-center justify-between px-[12px] pt-[3px] text-[35px] font-medium text-[#999]">
            <span className="origin-left scale-x-[.92]">09:30</span><span className="scale-x-[.92]">11:30</span><span className="origin-right scale-x-[.92]">15:00</span>
          </div>
          <VolumeChart />
          <FundChart />
        </div>
        <OrderBook />
      </div>
      <Discussion />
      <div className="mx-[15px] mt-[12px] flex h-[105px] items-center justify-between rounded-[18px] bg-[#dce7fa] pt-[2px] pr-[36px] pl-[42px] text-[40px] tracking-[1.100px] text-[#5f8fdc]">
        <span>这个行业，正在面临突破与升级！</span>
        <svg className="mt-[-2px] h-[32px] w-[32px]" viewBox="0 0 32 32"><path d="M2 2l28 28M30 2L2 30" stroke="#5f8fdc" strokeWidth="2.600" /></svg>
      </div>
      <div className="mt-[23px] h-[12px] bg-[#f4f4f4]" />
      <InfoTabs />
      <Toolbar />
    </div>
  );
}
